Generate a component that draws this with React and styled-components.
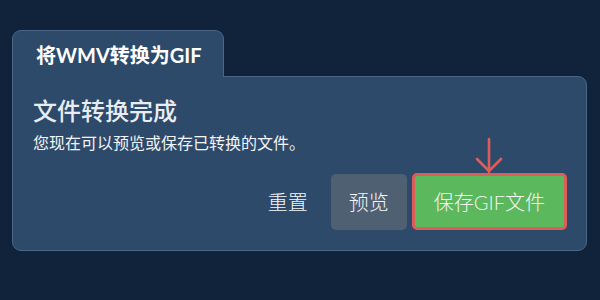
import React from 'react'
import styled, { createGlobalStyle } from 'styled-components'

const GlobalStyle = createGlobalStyle`
	html, body {
		margin: 0;
		padding: 0;
		background: #11233a;
		font-family: Lato, "Noto Sans CJK SC", sans-serif;
	}
`

const Page = styled.div`
	width: 600px;
	height: 300px;
	padding: 30px 13px 0 12px;
	box-sizing: border-box;
`

const Tab = styled.div`
	display: inline-flex;
	align-items: center;
	height: 47px;
	padding: 0 21px 0 23px;
	box-sizing: border-box;
	background: #2d4a6a;
	border: 1px solid #4a6786;
	border-bottom: none;
	border-radius: 9px 9px 0 0;
	color: #ffffff;
	font-size: 20px;
	font-weight: 700;
	position: relative;
	z-index: 1;
	margin-bottom: -1px;
`

const Panel = styled.div`
	background: #2d4a6a;
	border: 1px solid #4a6786;
	border-radius: 0 9px 9px 9px;
	padding: 17px 19px 20px 20px;
	display: flex;
	flex-direction: column;
`

const Heading = styled.h2`
	margin: 0;
	font-size: 24px;
	font-weight: 500;
	line-height: 34px;
	color: #e9edf1;
`

const Note = styled.p`
	margin: 4px 0 0;
	font-size: 16px;
	line-height: 22px;
	color: #f2f4f6;
`

const Actions = styled.div`
	display: flex;
	justify-content: flex-end;
	align-items: center;
	gap: 5px;
	margin-top: 19px;
`

const Button = styled.button`
	height: ${p => p.$tall ? '57px' : '56px'};
	padding: 0 ${p => p.$pad || '18px'};
	border: ${p => p.$outline ? `3px solid ${p.$outline}` : 'none'};
	border-radius: 5px;
	background: ${p => p.$bg || 'transparent'};
	color: #f4f6f8;
	font-family: inherit;
	font-size: 20px;
	font-weight: 300;
	cursor: pointer;
	position: relative;
`

const Arrow = styled.svg`
	position: absolute;
	left: 50%;
	top: -38px;
	margin-left: -15px;
	overflow: visible;
`

export default function App() {
	return (
		<>
			<GlobalStyle />
			<Page>
				<Tab>将WMV转换为GIF</Tab>
				<Panel>
					<Heading>文件转换完成</Heading>
					<Note>您现在可以预览或保存已转换的文件。</Note>
					<Actions>
						<Button>重置</Button>
						<Button $bg='#4f6072'>预览</Button>
						<Button $tall $bg='#5cb85c' $outline='#dc5d5a' $pad='19px'>
							<Arrow width='30' height='36' viewBox='0 0 30 36'>
								<path d='M15 1 V34 M3 21 L15 33 L27 21' fill='none' stroke='#dc5d5a' strokeWidth='2.6' strokeLinecap='round' strokeLinejoin='round' />
							</Arrow>
							保存GIF文件
						</Button>
					</Actions>
				</Panel>
			</Page>
		</>
	)
}
